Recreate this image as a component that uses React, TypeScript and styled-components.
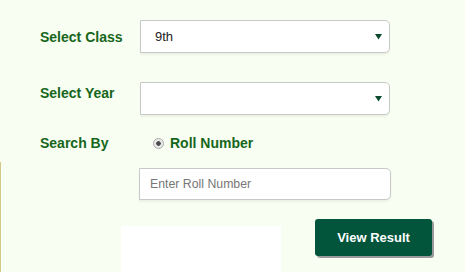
import * as React from 'react';
import styled, { createGlobalStyle } from 'styled-components';

const GlobalStyle = createGlobalStyle`
  html, body {
    margin: 0;
    padding: 0;
    background: #f8fef2;
    font-family: 'Liberation Sans', Arial, sans-serif;
  }
`;

const Page = styled.div`
  width: 465px;
  height: 272px;
  overflow: hidden;
  background: #f8fef2;
`;

const Top = styled.div`
  padding: 20px 0 0 40px;
  display: flex;
  flex-direction: column;
`;

const Row = styled.div<{ $gap?: number; $height: number }>`
  display: flex;
  align-items: flex-start;
  height: ${p => p.$height}px;
  margin-bottom: ${p => p.$gap ?? 0}px;
`;

const Label = styled.div<{ $offset: number }>`
  width: 100px;
  padding-top: ${p => p.$offset}px;
  font-size: 14px;
  line-height: 16px;
  font-weight: bold;
  color: #16661b;
`;

const Select = styled.div`
  box-sizing: border-box;
  width: 250px;
  height: 33px;
  display: flex;
  align-items: center;
  justify-content: space-between;
  padding: 0 7px 0 14px;
  background: #fff;
  border: 1px solid #c8c8c8;
  border-radius: 0 5px 5px 0;
  box-shadow: 0 2px 2px rgba(0, 0, 0, 0.05);
  font-size: 13px;
  color: #222;
`;

const Arrow = styled.svg`
  width: 7px;
  height: 6px;
  flex: none;
`;

const RadioLabel = styled.label`
  display: flex;
  align-items: center;
  gap: 6px;
  margin-left: 13px;
  font-size: 14px;
  line-height: 16px;
  font-weight: bold;
  color: #16661b;
`;

const RadioDot = styled.span`
  box-sizing: border-box;
  width: 11px;
  height: 11px;
  border-radius: 50%;
  border: 1px solid #a9a9a9;
  background: radial-gradient(circle, #4a4a4a 0 2px, #e6e6e6 2.5px, #f4f4f4 100%);
`;

const Lower = styled.div`
  margin-top: 10px;
  border-left: 1px solid #d2c88c;
  padding-top: 6px;
  height: 110px;
`;

const Input = styled.input`
  box-sizing: border-box;
  display: block;
  margin-left: 138px;
  width: 252px;
  height: 32px;
  padding: 0 10px;
  background: #fff;
  border: 1px solid #c8c8c8;
  border-radius: 0 5px 5px 0;
  box-shadow: 0 2px 2px rgba(0, 0, 0, 0.05);
  font-family: inherit;
  font-size: 12.3px;
  outline: none;

  &::placeholder {
    color: #777;
  }
`;

const Actions = styled.div`
  display: flex;
  align-items: flex-start;
  margin-top: 19px;
`;

const Blank = styled.div`
  margin: 7px 0 0 120px;
  width: 160px;
  height: 60px;
  background: #fff;
`;

const Button = styled.button`
  margin-left: 34px;
  width: 117px;
  height: 37px;
  background: #02553a;
  color: #fff;
  border: none;
  border-radius: 3px;
  box-shadow: 2px 2px 0 #9a9a9a;
  font-family: inherit;
  font-size: 13px;
  font-weight: bold;
  cursor: pointer;
`;

const DropArrow = () => (
  <Arrow viewBox="0 0 7 6">
    <path d="M0 0h7L3.5 5.5z" fill="#0b4a2c" />
  </Arrow>
);

export default function App() {
  return (
    <Page>
      <GlobalStyle />
      <Top>
        <Row $height={33} $gap={29}>
          <Label $offset={9}>Select Class</Label>
          <Select>
            <span>9th</span>
            <DropArrow />
          </Select>
        </Row>
        <Row $height={33} $gap={20}>
          <Label $offset={3}>Select Year</Label>
          <Select>
            <span />
            <DropArrow />
          </Select>
        </Row>
        <Row $height={17}>
          <Label $offset={0}>Search By</Label>
          <RadioLabel>
            <RadioDot />
            Roll Number
          </RadioLabel>
        </Row>
      </Top>
      <Lower>
        <Input placeholder="Enter Roll Number" />
        <Actions>
          <Blank />
          <Button>View Result</Button>
        </Actions>
      </Lower>
    </Page>
  );
}
